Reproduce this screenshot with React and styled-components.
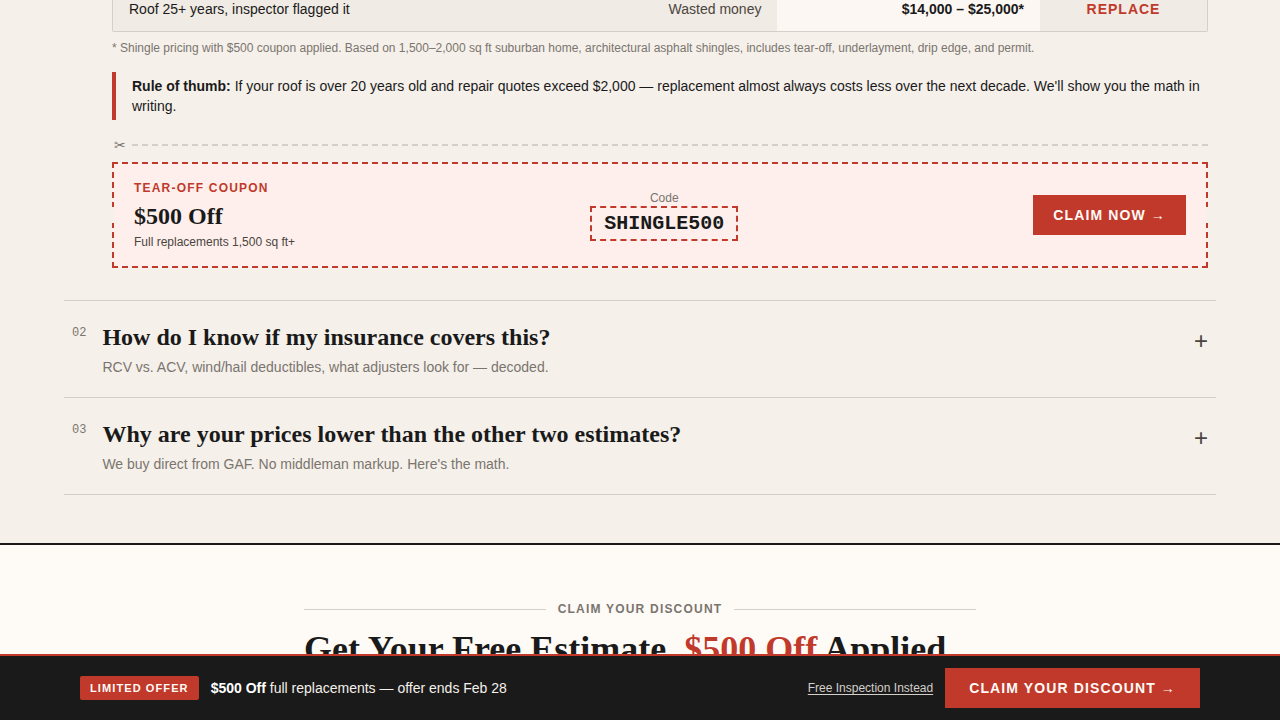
import React, { useState } from 'react';
import styled, { createGlobalStyle } from 'styled-components';

const GlobalStyle = createGlobalStyle`
  * {
    box-sizing: border-box;
  }
  body {
    margin: 0;
    background: #fefaf6;
    color: #1a1a1a;
    font-family: "Liberation Sans", Arial, sans-serif;
    font-size: 14px;
    line-height: 20px;
  }
  h2, p {
    margin: 0;
  }
`;

const Page = styled.div`
  height: 100vh;
  overflow: hidden;
`;

const Questions = styled.main`
  background: #f5f0ea;
  border-bottom: 2px solid #1a1a1a;
  padding: 0 64px 48px;
`;

const Answer = styled.div`
  padding: 0 8px 32px 48px;
`;

const PriceTable = styled.table`
  width: 100%;
  table-layout: fixed;
  border-collapse: separate;
  border-spacing: 0;
  border: 1px solid #d4cfc9;
  border-top: 0;
  border-radius: 0 0 2px 2px;
  background: #f0ebe4;
`;

const Cell = styled.td`
  width: ${({$width}) => $width || 'auto'};
  padding: 0 16px 13px;
  font-size: 14px;
  line-height: 18px;
  color: ${({$color}) => $color || '#1a1a1a'};
  background: ${({$bg}) => $bg || 'transparent'};
  font-weight: ${({$bold}) => ($bold ? 700 : 400)};
  text-align: ${({$align}) => $align || 'left'};
`;

const Verdict = styled.span`
  letter-spacing: 1px;
`;

const Footnote = styled.p`
  margin-top: 8px;
  font-size: 12px;
  line-height: 16px;
  color: #7a756f;
`;

const RuleOfThumb = styled.p`
  margin-top: 16px;
  padding: 4px 0 4px 16px;
  border-left: 4px solid #c0392b;
`;

const TearLine = styled.div`
  display: flex;
  align-items: center;
  gap: 4px;
  height: 18px;
  margin: 16px 0 8px;
  color: #7a756f;

  span {
    width: 16px;
    text-align: center;
  }

  hr {
    flex: 1;
    margin: 0;
    border: 0;
    border-top: 2px dashed #d4cfc9;
  }
`;

const CouponBox = styled.section`
  position: relative;
  display: flex;
  justify-content: space-between;
  align-items: center;
  padding: 16px 20px;
  border: 2px dashed #c0392b;
  background: #feefec;

  &::before, &::after {
    content: "";
    position: absolute;
    top: 50%;
    width: 8px;
    height: 16px;
    margin-top: -8px;
    background: #f5f0ea;
  }
  &::before {
    left: -8px;
  }
  &::after {
    right: -8px;
  }
`;

const CouponLabel = styled.div`
  margin-bottom: 2px;
  font-size: 12px;
  line-height: 16px;
  font-weight: 700;
  letter-spacing: 0.1em;
  color: #c0392b;
`;

const CouponValue = styled.div`
  font-family: "Liberation Serif", "Times New Roman", serif;
  font-size: 24px;
  line-height: 36px;
  font-weight: 700;
`;

const CouponNote = styled.div`
  font-size: 12px;
  line-height: 16px;
  color: #4a4540;
`;

const CodeColumn = styled.div`
  padding-top: 1px;
  text-align: center;
  font-size: 12px;
  line-height: 16px;
  color: #7a756f;
`;

const Code = styled.div`
  padding: 4px 12px;
  border: 2px dashed #c0392b;
  font-family: "Liberation Mono", "Courier New", monospace;
  font-size: 20px;
  line-height: 23px;
  font-weight: 700;
  color: #1a1a1a;
`;

const ClaimLink = styled.a`
  display: block;
  padding: 10px ${({$wide}) => ($wide ? 24 : 20)}px;
  background: #c0392b;
  color: #fefaf6;
  font-weight: 700;
  letter-spacing: 0.08em;
  text-decoration: none;
  white-space: nowrap;
`;

const QuestionButton = styled.button`
  display: flex;
  align-items: flex-start;
  gap: 16px;
  width: 100%;
  padding: 20px 8px;
  border: 0;
  border-top: 1px solid #d4cfc9;
  background: none;
  color: #1a1a1a;
  font: inherit;
  text-align: left;
  cursor: pointer;
`;

const QuestionList = styled.div`
  border-bottom: 1px solid #d4cfc9;
`;

const Number = styled.span`
  padding-top: 2px;
  font-family: "Liberation Mono", "Courier New", monospace;
  font-size: 12px;
  color: #7a756f;
`;

const QuestionText = styled.span`
  flex: 1;
  display: flex;
  flex-direction: column;
  gap: 4px;
`;

const QuestionTitle = styled.span`
  font-family: "Liberation Serif", "Times New Roman", serif;
  font-size: 24px;
  line-height: 32px;
  font-weight: 700;
`;

const QuestionTeaser = styled.span`
  color: #7a756f;
`;

const Toggle = styled.span`
  padding-top: 4px;
  font-size: 24px;
  line-height: 32px;
  color: #4a4540;
`;

const Estimate = styled.section`
  max-width: 672px;
  margin: 0 auto;
  padding: 56px 0;
`;

const Eyebrow = styled.div`
  display: flex;
  align-items: center;
  gap: 12px;
  font-size: 12px;
  line-height: 16px;
  font-weight: 700;
  letter-spacing: 0.1em;
  color: #7a756f;

  &::before, &::after {
    content: "";
    flex: 1;
    height: 1px;
    background: #d4cfc9;
  }
`;

const EstimateTitle = styled.h2`
  margin-top: 12px;
  font-family: "Liberation Serif", "Times New Roman", serif;
  font-size: 36px;
  line-height: 40px;
  font-weight: 700;

  em {
    font-style: normal;
    color: #c0392b;
  }
`;

const OfferBar = styled.footer`
  position: fixed;
  left: 0;
  right: 0;
  bottom: 0;
  display: flex;
  align-items: center;
  gap: 12px;
  padding: 12px 80px;
  border-top: 2px solid #c0392b;
  background: #1a1a1a;
  color: #f5f0ea;
`;

const Badge = styled.span`
  padding: 4px 10px;
  border-radius: 2px;
  background: #c0392b;
  color: #fefaf6;
  font-size: 11px;
  line-height: 16px;
  font-weight: 700;
  letter-spacing: 0.1em;
`;

const OfferText = styled.p`
  flex: 1;

  strong {
    color: #fff;
  }
`;

const InspectionLink = styled.a`
  font-size: 12px;
  color: #d4cfc9;
  text-decoration: underline;
  text-underline-offset: 2px;
`;

const questions = [
  {
    number: '02',
    title: 'How do I know if my insurance covers this?',
    teaser: 'RCV vs. ACV, wind/hail deductibles, what adjusters look for — decoded.',
  },
  {
    number: '03',
    title: 'Why are your prices lower than the other two estimates?',
    teaser: 'We buy direct from GAF. No middleman markup. Here\'s the math.',
  },
];

const Question = ({question}) => {
  const [open, setOpen] = useState(false);

  return (
    <QuestionButton type="button" aria-expanded={open} onClick={() => setOpen(!open)}>
      <Number>{question.number}</Number>
      <QuestionText>
        <QuestionTitle>{question.title}</QuestionTitle>
        <QuestionTeaser>{question.teaser}</QuestionTeaser>
      </QuestionText>
      <Toggle>{open ? '–' : '+'}</Toggle>
    </QuestionButton>
  );
};

const Coupon = () => (
  <CouponBox>
    <div>
      <CouponLabel>TEAR-OFF COUPON</CouponLabel>
      <CouponValue>$500 Off</CouponValue>
      <CouponNote>Full replacements 1,500 sq ft+</CouponNote>
    </div>
    <CodeColumn>
      Code
      <Code>SHINGLE500</Code>
    </CodeColumn>
    <ClaimLink href="#claim">CLAIM NOW →</ClaimLink>
  </CouponBox>
);

const App = () => {
  return (
    <Page>
      <GlobalStyle />
      <Questions>
        <Answer>
          <PriceTable>
            <tbody>
              <tr>
                <Cell>Roof 25+ years, inspector flagged it</Cell>
                <Cell $width="24%" $align="right" $color="#4a4540">Wasted money</Cell>
                <Cell $width="24%" $align="right" $bg="#fdf7f4" $bold>$14,000 – $25,000*</Cell>
                <Cell $width="167px" $align="center" $color="#c0392b" $bold>
                  <Verdict>REPLACE</Verdict>
                </Cell>
              </tr>
            </tbody>
          </PriceTable>
          <Footnote>
            * Shingle pricing with $500 coupon applied. Based on 1,500–2,000 sq ft suburban home,
            architectural asphalt shingles, includes tear-off, underlayment, drip edge, and permit.
          </Footnote>
          <RuleOfThumb>
            <strong>Rule of thumb:</strong> If your roof is over 20 years old and repair quotes
            exceed $2,000 — replacement almost always costs less over the next decade. We'll show
            you the math in writing.
          </RuleOfThumb>
          <TearLine>
            <span>✂</span>
            <hr />
          </TearLine>
          <Coupon />
        </Answer>
        <QuestionList>
          {questions.map((question) => (
            <Question key={question.number} question={question} />
          ))}
        </QuestionList>
      </Questions>
      <Estimate id="claim">
        <Eyebrow>CLAIM YOUR DISCOUNT</Eyebrow>
        <EstimateTitle>
          Get Your Free Estimate, <em>$500 Off</em> Applied
        </EstimateTitle>
      </Estimate>
      <OfferBar>
        <Badge>LIMITED OFFER</Badge>
        <OfferText>
          <strong>$500 Off</strong> full replacements — offer ends Feb 28
        </OfferText>
        <InspectionLink href="#inspection">Free Inspection Instead</InspectionLink>
        <ClaimLink $wide href="#claim">CLAIM YOUR DISCOUNT →</ClaimLink>
      </OfferBar>
    </Page>
  );
};

export default App;
